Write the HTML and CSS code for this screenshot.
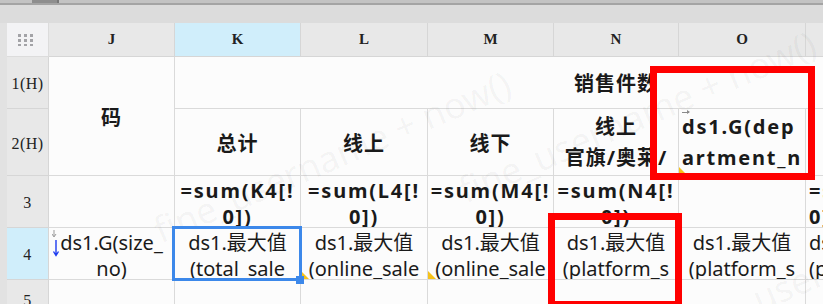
FILE: index.html
```html
<!DOCTYPE html>
<html lang="zh">
<head>
    <meta charset="UTF-8">
    <title>Sheet</title>
    <link rel="stylesheet" href="styles.css">
</head>
<body>
    <div class="topbar">
        <div class="tab-stub"></div>
    </div>
    <div class="band"></div>

    <div class="sheet">
        <!-- column headers -->
        <div class="corner">
            <svg width="16" height="12" viewBox="0 0 16 12">
                <g fill="#a3a3a7">
                    <rect x="0" y="0" width="3" height="3"/><rect x="6" y="0" width="3" height="3"/><rect x="12" y="0" width="3" height="3"/>
                    <rect x="0" y="5" width="3" height="3"/><rect x="6" y="5" width="3" height="3"/><rect x="12" y="5" width="3" height="3"/>
                    <rect x="0" y="10" width="3" height="2"/><rect x="6" y="10" width="3" height="2"/><rect x="12" y="10" width="3" height="2"/>
                </g>
            </svg>
        </div>
        <div class="colhead">J</div>
        <div class="colhead active">K</div>
        <div class="colhead">L</div>
        <div class="colhead">M</div>
        <div class="colhead">N</div>
        <div class="colhead">O</div>
        <div class="colhead">P</div>
        <div class="colhead">Q</div>

        <!-- row 1 -->
        <div class="rowhead">1(H)</div>
        <div class="cell bold span-rows">码</div>
        <div class="cell bold span-title">销售件数</div>

        <!-- row 2 -->
        <div class="rowhead">2(H)</div>
        <div class="cell bold">总计</div>
        <div class="cell bold">线上</div>
        <div class="cell bold">线下</div>
        <div class="cell bold lines tall">
            <span>线上</span>
            <span>官旗/奥莱/</span>
        </div>
        <div class="cell bold lines tall left spaced">
            <i class="mark-arrow-right"></i>
            <span>ds1.G(dep</span>
            <span>artment_n</span>
            <i class="mark-tri"></i>
        </div>
        <div class="cell"></div>
        <div class="cell"></div>

        <!-- row 3 -->
        <div class="rowhead">3</div>
        <div class="cell"></div>
        <div class="cell bold lines spaced"><span>=sum(K4[!</span><span>0])</span></div>
        <div class="cell bold lines spaced"><span>=sum(L4[!</span><span>0])</span></div>
        <div class="cell bold lines spaced"><span>=sum(M4[!</span><span>0])</span></div>
        <div class="cell bold lines spaced"><span>=sum(N4[!</span><span>0])</span></div>
        <div class="cell"></div>
        <div class="cell bold lines spaced left"><span>=sum(P4[!</span><span>0])</span></div>
        <div class="cell"></div>

        <!-- row 4 -->
        <div class="rowhead active">4</div>
        <div class="cell lines">
            <svg class="mark-down" width="8" height="28" viewBox="0 0 8 28">
                <path d="M2 0v6M0 4l2 3 2-3" stroke="#9a9a9a" fill="none" stroke-width="1"/>
                <path d="M4 10v15M1.5 21.5l2.5 4 2.5-4" stroke="#1e3cf0" fill="none" stroke-width="1.4"/>
            </svg>
            <span>ds1.G(size_</span>
            <span>no)</span>
        </div>
        <div class="cell lines selected">
            <span>ds1.最大值</span>
            <span>(total_sale</span>
            <i class="handle"></i>
        </div>
        <div class="cell lines">
            <span>ds1.最大值</span>
            <span>(online_sale</span>
            <i class="mark-tri"></i>
        </div>
        <div class="cell lines">
            <span>ds1.最大值</span>
            <span>(online_sale</span>
            <i class="mark-tri"></i>
        </div>
        <div class="cell lines">
            <span>ds1.最大值</span>
            <span>(platform_s</span>
        </div>
        <div class="cell lines">
            <span>ds1.最大值</span>
            <span>(platform_s</span>
        </div>
        <div class="cell lines left"><span>ds1.最大值</span><span>(platform_s</span></div>
        <div class="cell"></div>

        <!-- row 5 -->
        <div class="rowhead">5</div>
        <div class="cell"></div>
        <div class="cell"></div>
        <div class="cell"></div>
        <div class="cell"></div>
        <div class="cell"></div>
        <div class="cell"></div>
        <div class="cell"></div>
        <div class="cell"></div>
    </div>

    <div class="watermark wm-1">fine_username + now()</div>
    <div class="watermark wm-2">fine_username + now()</div>
    <div class="watermark wm-3">fine_username + now()</div>

    <div class="redbox box-top"></div>
    <div class="redbox box-bottom"></div>
</body>
</html>
```

FILE: styles.css
```css
body {
    margin: 0;
    width: 823px;
    height: 304px;
    overflow: hidden;
    position: relative;
    background-color: #e2e2e2;
    font-family: "Noto Sans", "Noto Sans CJK SC", sans-serif;
    color: #1a1a1a;
}

.topbar {
    height: 3px;
    background-color: #c3c3c3;
    border-bottom: 2px solid #a4a4a4;
    position: relative;
}

.tab-stub {
    margin-left: 32px;
    width: 25px;
    height: 3px;
    background-color: #8e8e8e;
    border-right: 2px solid #777;
}

.band {
    height: 18px;
    background-color: #dcdcdc;
}

.sheet {
    margin-left: 7px;
    display: grid;
    grid-template-columns: 42px 126px 126px 127px 126px 125px 127px 126px 126px;
    grid-template-rows: 34px 52px 67px 52px 52px 40px;
    width: 1100px;
    background-color: #fbfbfb;
}

.corner {
    background-color: #f3f3f5;
    border-right: 1px solid #dcdcdc;
    border-bottom: 1px solid #dcdcdc;
    display: flex;
    align-items: center;
    justify-content: center;
    padding-right: 3px;
}

.colhead {
    background-color: #e8e8e8;
    border-right: 1px solid #d6d6d6;
    border-bottom: 1px solid #d6d6d6;
    display: flex;
    align-items: center;
    justify-content: center;
    font-family: "Liberation Serif", "DejaVu Serif", serif;
    font-weight: bold;
    font-size: 15px;
    color: #222;
}

.colhead.active {
    background-color: #d0eefb;
}

.rowhead {
    background-color: #e8e8e8;
    border-right: 1px solid #d6d6d6;
    border-bottom: 1px solid #d6d6d6;
    display: flex;
    align-items: center;
    justify-content: center;
    font-family: "Liberation Serif", "DejaVu Serif", serif;
    font-size: 16px;
    letter-spacing: 0.5px;
    color: #222;
    padding-top: 3px;
    box-sizing: border-box;
}

.rowhead.active {
    background-color: #d0eefb;
}

.cell {
    background-color: #fcfcfc;
    border-right: 1px solid #dadada;
    border-bottom: 1px solid #dadada;
    display: flex;
    align-items: center;
    justify-content: center;
    font-size: 20px;
    overflow: hidden;
    position: relative;
    white-space: nowrap;
}

.cell.bold {
    font-weight: bold;
    letter-spacing: 1px;
}

.cell.spaced {
    letter-spacing: 1.8px;
}

.span-rows {
    grid-row: span 2;
}

.span-title {
    grid-column: span 7;
}

.lines {
    flex-direction: column;
    line-height: 29px;
}

.lines.tall {
    line-height: 31px;
}

.lines span {
    display: block;
    width: 100%;
    text-align: center;
    overflow: hidden;
}

.lines.left span {
    text-align: left;
    padding-left: 6px;
}

.mark-down {
    position: absolute;
    left: 3px;
    top: 2px;
}

.mark-arrow-right {
    position: absolute;
    left: 3px;
    top: 3px;
    width: 7px;
    height: 1px;
    background-color: #8a8a8a;
}

.mark-arrow-right::after {
    content: "";
    position: absolute;
    right: -1px;
    top: -2px;
    border-left: 3px solid #8a8a8a;
    border-top: 2.5px solid transparent;
    border-bottom: 2.5px solid transparent;
}

.mark-tri {
    position: absolute;
    left: 0;
    bottom: 0;
    width: 0;
    height: 0;
    border-left: 8px solid #f6c21a;
    border-top: 8px solid transparent;
}

.cell.selected {
    overflow: visible;
    z-index: 2;
}

.cell.selected::before {
    content: "";
    position: absolute;
    left: -3px;
    top: -2px;
    right: -2px;
    bottom: -2px;
    border: 3px solid #3c88ea;
}

.cell.selected span {
    overflow: hidden;
}

.handle {
    position: absolute;
    right: -4px;
    bottom: -5px;
    width: 8px;
    height: 8px;
    background-color: #3c88ea;
}

.watermark {
    position: absolute;
    font-family: "Noto Sans", sans-serif;
    font-size: 36px;
    color: rgba(0, 0, 0, 0.045);
    white-space: nowrap;
    transform: rotate(-23deg);
    transform-origin: left bottom;
    pointer-events: none;
}

.wm-1 {
    left: 165px;
    top: 205px;
}

.wm-2 {
    left: 690px;
    top: 305px;
}

.wm-3 {
    left: 470px;
    top: 165px;
}

.redbox {
    position: absolute;
    border: 7px solid #ff0000;
    box-sizing: border-box;
}

.box-top {
    left: 650px;
    top: 66px;
    width: 165px;
    height: 114px;
}

.box-bottom {
    left: 548px;
    top: 213px;
    width: 134px;
    height: 95px;
}
```
